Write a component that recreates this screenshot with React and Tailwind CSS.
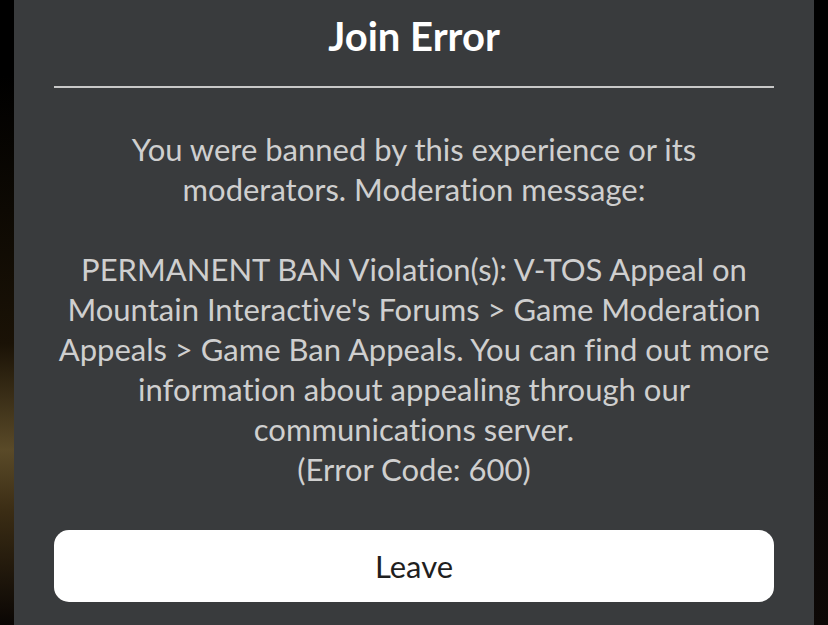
export default function App() {
  return (
    <div className="w-[828px] h-[625px] flex bg-black overflow-hidden [font-variant-ligatures:none]" style={{ fontFamily: "Lato, 'Open Sans', sans-serif" }}>
      <div className="w-[14px] h-full bg-[linear-gradient(to_bottom,#000_0%,#000_12%,#1a1206_55%,#5a4a28_72%,#3a2c14_82%,#0a0604_100%)]" />
      <div className="w-[800px] h-full bg-[#393b3d] px-10 flex flex-col">
        <h1 className="h-[76px] pt-[12px] text-center text-white font-bold text-[40px] leading-[48px]">Join Error</h1>
        <div className="h-[2px] bg-[#c8c8c8] mt-[10px]" />
        <p className="mt-[41px] text-center text-[#cfcfcf] text-[31px] leading-[40px]">
          You were banned by this experience or its<br />
          moderators. Moderation message:<br />
          <br />
          PERMANENT BAN Violation(s): V-TOS Appeal on<br />
          Mountain Interactive's Forums &gt; Game Moderation<br />
          Appeals &gt; Game Ban Appeals. You can find out more<br />
          information about appealing through our<br />
          communications server.<br />
          (Error Code: 600)
        </p>
        <button className="mt-[41px] h-[72px] w-full rounded-[15px] bg-white text-[#1f1f1f] text-[31px] leading-none">Leave</button>
      </div>
      <div className="w-[14px] h-full bg-[linear-gradient(to_bottom,#000_0%,#000_50%,#0d0806_100%)]" />
    </div>
  );
}
